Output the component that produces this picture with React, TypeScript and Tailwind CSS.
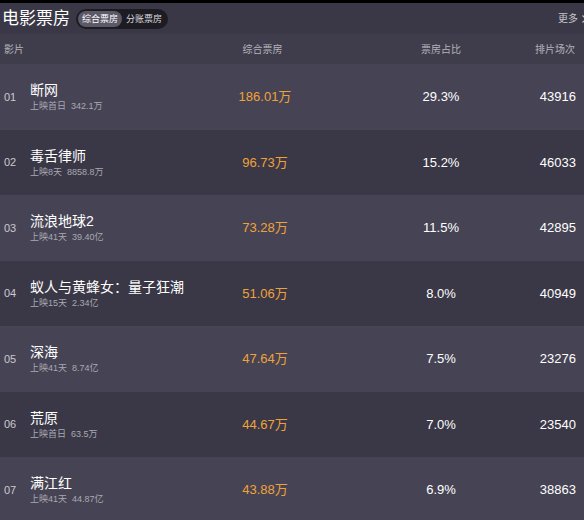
import React from "react";

const rows = [
  { r: "01", name: "断网", sub: "上映首日", total: "342.1万", box: "186.01万", pct: "29.3%", n: "43916" },
  { r: "02", name: "毒舌律师", sub: "上映8天", total: "8858.8万", box: "96.73万", pct: "15.2%", n: "46033" },
  { r: "03", name: "流浪地球2", sub: "上映41天", total: "39.40亿", box: "73.28万", pct: "11.5%", n: "42895" },
  { r: "04", name: "蚁人与黄蜂女：量子狂潮", sub: "上映15天", total: "2.34亿", box: "51.06万", pct: "8.0%", n: "40949" },
  { r: "05", name: "深海", sub: "上映41天", total: "8.74亿", box: "47.64万", pct: "7.5%", n: "23276" },
  { r: "06", name: "荒原", sub: "上映首日", total: "63.5万", box: "44.67万", pct: "7.0%", n: "23540" },
  { r: "07", name: "满江红", sub: "上映41天", total: "44.87亿", box: "43.88万", pct: "6.9%", n: "38863" },
];

const font = { fontFamily: '"Liberation Sans", "Noto Sans CJK SC", sans-serif' };

export default function App() {
  return (
    <div className="w-[584px] h-[520px] overflow-hidden bg-[#3a3846] text-white" style={font}>
      <div className="h-[3px] bg-black" />
      <div className="h-[31px] flex items-center pl-[2px] overflow-hidden">
        <div className="text-[17px] leading-none text-white">电影票房</div>
        <div className="ml-[6px] flex items-center h-[20px] rounded-full bg-[#1d1c23] p-[2px]">
          <div className="h-[16px] px-[4px] rounded-full bg-[#5b5968] text-[9px] leading-[16px] text-white">综合票房</div>
          <div className="h-[16px] px-[4px] text-[9px] leading-[16px] text-[#d8d8de]">分账票房</div>
        </div>
        <div className="ml-auto shrink-0 flex items-center text-[10px] text-[#c4c4cc] mr-[-4px]">
          <span>更多</span>
          <svg width="7" height="10" viewBox="0 0 7 10" className="ml-[3px]">
            <path d="M1.5 1.5 L5 5 L1.5 8.5" fill="none" stroke="#c4c4cc" strokeWidth="1.2" />
          </svg>
        </div>
      </div>
      <div className="h-[30px] grid grid-cols-[30px_185px_100px_76px_100px_93px] items-center bg-[#3f3d4b] text-[10px] text-[#b4b3bc]">
        <div className="pl-[4px] col-span-2">影片</div>
        <div className="text-center -ml-[5px]">综合票房</div>
        <div />
        <div className="text-center">票房占比</div>
        <div className="text-right pr-[9px]">排片场次</div>
      </div>
      {rows.map((x, i) => (
        <div
          key={x.r}
          className={`h-[65.5px] grid grid-cols-[30px_185px_100px_76px_100px_93px] items-center ${i % 2 === 0 ? "bg-[#464454]" : "bg-[#3a3846]"}`}
        >
          <div className="pl-[4px] text-[11px] text-[#c9c8d0]">{x.r}</div>
          <div className="flex flex-col">
            <div className="text-[14px] leading-[18px] text-white">{x.name}</div>
            <div className="text-[9px] leading-[12px] mt-[1px] text-[#a9a8b2]">
              {x.sub}
              <span className="ml-[5px]">{x.total}</span>
            </div>
          </div>
          <div className="text-center text-[13px] text-[#f0a23a]">{x.box}</div>
          <div />
          <div className="text-center text-[13px] text-white">{x.pct}</div>
          <div className="text-right pr-[8px] text-[13px] text-white">{x.n}</div>
        </div>
      ))}
    </div>
  );
}
